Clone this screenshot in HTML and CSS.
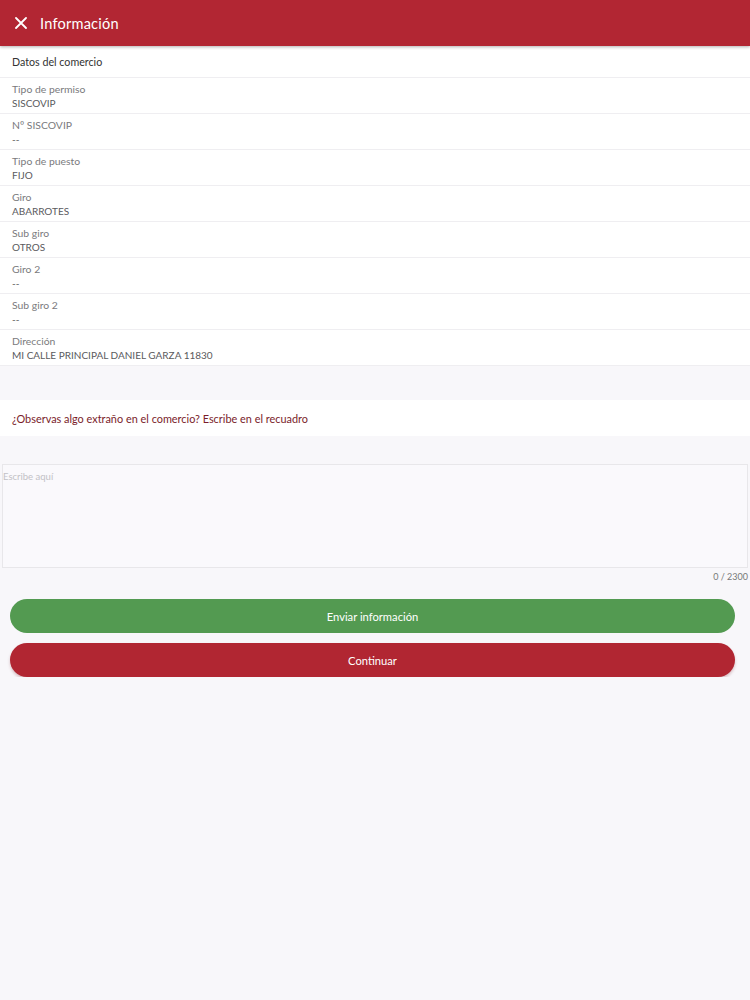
FILE: index.html
```html
<!DOCTYPE html>
<html lang="es">
<head>
<meta charset="utf-8">
<title>Información</title>
<link rel="stylesheet" href="styles.css">
</head>
<body>
<header class="topbar">
  <svg class="close" viewBox="0 0 12 12" width="12" height="12"><path d="M1 1L11 11M11 1L1 11" stroke="#fff" stroke-width="1.8" stroke-linecap="round"/></svg>
  <span class="title">Información</span>
</header>
<section class="list">
  <div class="section-head">Datos del comercio</div>
  <div class="row"><div class="label">Tipo de permiso</div><div class="value">SISCOVIP</div></div>
  <div class="row"><div class="label">Nº SISCOVIP</div><div class="value">--</div></div>
  <div class="row"><div class="label">Tipo de puesto</div><div class="value">FIJO</div></div>
  <div class="row"><div class="label">Giro</div><div class="value">ABARROTES</div></div>
  <div class="row"><div class="label">Sub giro</div><div class="value">OTROS</div></div>
  <div class="row"><div class="label">Giro 2</div><div class="value">--</div></div>
  <div class="row"><div class="label">Sub giro 2</div><div class="value">--</div></div>
  <div class="row"><div class="label">Dirección</div><div class="value">MI CALLE PRINCIPAL DANIEL GARZA 11830</div></div>
</section>
<div class="question">¿Observas algo extraño en el comercio? Escribe en el recuadro</div>
<div class="field">
  <textarea class="textarea" placeholder="Escribe aquí"></textarea>
  <div class="counter">0 / 2300</div>
</div>
<div class="actions">
  <button class="btn btn-green">Enviar información</button>
  <button class="btn btn-red">Continuar</button>
</div>
</body>
</html>
```
FILE: styles.css
```css
html, body {
  margin: 0;
  padding: 0;
  background: #f8f7fa;
  font-family: "Lato", "Noto Sans", sans-serif;
  color: #444;
}
.topbar {
  height: 46px;
  background: #b22633;
  display: flex;
  align-items: center;
  padding-left: 15px;
  gap: 13px;
  box-shadow: 0 1px 3px rgba(0,0,0,0.3);
  position: relative;
}
.title {
  color: #fff;
  font-size: 14.6px;
  letter-spacing: 0.2px;
}
.list {
  background: #fff;
}
.section-head {
  height: 31px;
  display: flex;
  align-items: center;
  padding-left: 12px;
  font-size: 10.7px;
  color: #333;
  border-bottom: 1px solid #efeef1;
}
.row {
  height: 35px;
  padding-left: 12px;
  border-bottom: 1px solid #efeef1;
  display: flex;
  flex-direction: column;
  justify-content: center;
  font-size: 10.4px;
  line-height: 14px;
}
.label { color: #7a7a7d; }
.value { color: #5a5a5d; font-size: 10px; }
.question {
  margin-top: 34px;
  height: 36px;
  background: #fff;
  display: flex;
  align-items: center;
  padding-left: 12px;
  font-size: 10.9px;
  color: #7a1d2a;
}
.field {
  padding: 28px 2px 0 2px;
}
.textarea {
  display: block;
  box-sizing: border-box;
  width: 100%;
  height: 104px;
  border: 1px solid #e8e7ea;
  background: #faf9fc;
  resize: none;
  padding: 6px 0 0 0;
  font-family: inherit;
  font-size: 9.5px;
  color: #444;
  outline: none;
}
.textarea::placeholder { color: #c2c1c6; }
.counter {
  text-align: right;
  font-size: 9px;
  color: #777;
  padding-top: 3px;
}
.actions {
  padding: 17px 15px 0 10px;
  display: flex;
  flex-direction: column;
  gap: 10px;
}
.btn {
  height: 34px;
  border: none;
  border-radius: 17px;
  color: #fff;
  font-family: inherit;
  font-size: 11.2px;
  width: 100%;
}
.btn-green { background: #539a51; }
.btn-red { background: #b12632; box-shadow: 0 2px 3px rgba(120,20,30,0.25); }
```
